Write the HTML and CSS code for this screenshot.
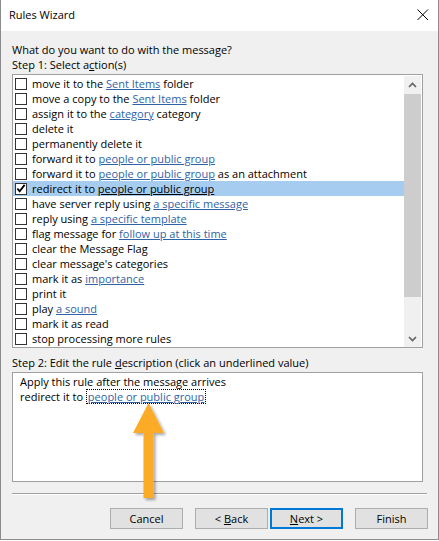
FILE: index.html
```html
<!DOCTYPE html>
<html>
<head>
<meta charset="utf-8">
<title>Rules Wizard</title>
<link rel="stylesheet" href="styles.css">
</head>
<body>
<div class="window">
  <div class="titlebar">
    <span class="title">Rules Wizard</span>
    <svg class="close" width="12" height="12" viewBox="0 0 12 12"><path d="M0.5 0.5 L11 11 M11 0.5 L0.5 11" stroke="#000" stroke-width="1" fill="none"/></svg>
  </div>
  <div class="content">
    <div class="label first">What do you want to do with the message?</div>
    <div class="label">Step 1: Select a<u>c</u>tion(s)</div>
    <div class="listbox">
      <ul class="items">
        <li class="item"><span class="cb"></span><span class="txt">move it to the <span class="lnk">Sent Items</span> folder</span></li>
        <li class="item"><span class="cb"></span><span class="txt">move a copy to the <span class="lnk">Sent Items</span> folder</span></li>
        <li class="item"><span class="cb"></span><span class="txt">assign it to the <span class="lnk">category</span> category</span></li>
        <li class="item"><span class="cb"></span><span class="txt">delete it</span></li>
        <li class="item"><span class="cb"></span><span class="txt">permanently delete it</span></li>
        <li class="item"><span class="cb"></span><span class="txt">forward it to <span class="lnk">people or public group</span></span></li>
        <li class="item"><span class="cb"></span><span class="txt">forward it to <span class="lnk">people or public group</span> as an attachment</span></li>
        <li class="item selected"><span class="cb checked"><svg width="11" height="11" viewBox="0 0 11 11"><path d="M1.5 5.5 L4 8.5 L9.5 1.5" stroke="#000" stroke-width="2" fill="none"/></svg></span><span class="txt">redirect it to <span class="lnk">people or public group</span></span></li>
        <li class="item"><span class="cb"></span><span class="txt">have server reply using <span class="lnk">a specific message</span></span></li>
        <li class="item"><span class="cb"></span><span class="txt">reply using <span class="lnk">a specific template</span></span></li>
        <li class="item"><span class="cb"></span><span class="txt">flag message for <span class="lnk">follow up at this time</span></span></li>
        <li class="item"><span class="cb"></span><span class="txt">clear the Message Flag</span></li>
        <li class="item"><span class="cb"></span><span class="txt">clear message's categories</span></li>
        <li class="item"><span class="cb"></span><span class="txt">mark it as <span class="lnk">importance</span></span></li>
        <li class="item"><span class="cb"></span><span class="txt">print it</span></li>
        <li class="item"><span class="cb"></span><span class="txt">play <span class="lnk">a sound</span></span></li>
        <li class="item"><span class="cb"></span><span class="txt">mark it as read</span></li>
        <li class="item"><span class="cb"></span><span class="txt">stop processing more rules</span></li>
      </ul>
      <div class="scrollbar">
        <div class="sb-btn"><svg width="9" height="6" viewBox="0 0 9 6"><path d="M1 5 L4.5 1.5 L8 5" stroke="#606060" stroke-width="1.6" fill="none"/></svg></div>
        <div class="sb-track"><div class="thumb"></div></div>
        <div class="sb-btn"><svg width="9" height="6" viewBox="0 0 9 6"><path d="M1 1 L4.5 4.5 L8 1" stroke="#606060" stroke-width="1.6" fill="none"/></svg></div>
      </div>
    </div>
    <div class="label step2">Step 2: Edit the rule <u>d</u>escription (click an underlined value)</div>
    <div class="desc">
      <div class="desc-line">Apply this rule after the message arrives</div>
      <div class="desc-line">redirect it to <span class="focus"><span class="lnk">people or public group</span></span></div>
    </div>
    <div class="sep"></div>
    <div class="buttons">
      <button class="btn">Cancel</button>
      <div class="pair">
        <button class="btn">&lt; <u>B</u>ack</button>
        <button class="btn default"><u>N</u>ext &gt;</button>
      </div>
      <button class="btn">Finish</button>
    </div>
  </div>
  <svg class="arrow" width="44" height="110" viewBox="0 0 44 110">
    <defs>
      <filter id="sh" x="-50%" y="-20%" width="200%" height="150%">
        <feGaussianBlur in="SourceAlpha" stdDeviation="1.6"/>
        <feOffset dx="2" dy="2" result="b"/>
        <feComponentTransfer><feFuncA type="linear" slope="0.35"/></feComponentTransfer>
        <feMerge><feMergeNode/><feMergeNode in="SourceGraphic"/></feMerge>
      </filter>
    </defs>
    <path d="M20.5 5 L36 35 L25.5 35 L25.5 100 L15.5 100 L15.5 35 L5 35 Z" fill="#fcab25" filter="url(#sh)"/>
  </svg>
</div>
</body>
</html>
```

FILE: styles.css
```css
* { box-sizing: border-box; }
html, body { margin: 0; padding: 0; background: #ffffff; }
body {
  font-family: "Open Sans", "Noto Sans", sans-serif;
  font-size: 11px;
  color: #000;
}
.window {
  position: relative;
  width: 439px;
  height: 540px;
  border: 1px solid #8c8c8c;
  border-top: none;
  background: #f0f0f0;
  display: flex;
  flex-direction: column;
}
.titlebar {
  height: 31px;
  background: #ffffff;
  display: flex;
  align-items: center;
  justify-content: space-between;
  padding: 0 9px 0 8px;
}
.title { font-size: 11px; line-height: 16px; margin-top: -1px; }
.close { display: block; margin-top: -1px; }
.content {
  padding: 0 10px 0 11px;
  display: flex;
  flex-direction: column;
}
.label { line-height: 15px; height: 15px; white-space: nowrap; }
.label.first { margin-top: 11px; }
.listbox {
  margin-top: 2px;
  width: 411px;
  height: 274px;
  border: 1px solid #a0a0a0;
  background: #fff;
  display: flex;
  padding: 1px 1px 0 0;
}
.items {
  list-style: none;
  margin: 0;
  padding: 0;
  flex: 1;
}
.item {
  height: 15px;
  display: flex;
  align-items: center;
  white-space: nowrap;
}
.item.selected { background: #a6cdf0; }
.cb {
  width: 12px;
  height: 12px;
  border: 1px solid #333;
  background: #fff;
  margin-left: 2px;
  margin-right: 5px;
  flex: none;
  display: flex;
  align-items: center;
  justify-content: center;
}
.cb svg { display: block; }
.txt { line-height: 15px; }
.lnk { color: #2f63a6; text-decoration: underline; text-underline-offset: 1px; }
.selected .lnk { color: #000; }
.scrollbar {
  width: 17px;
  flex: none;
  background: #f0f0f0;
  display: flex;
  flex-direction: column;
}
.sb-btn {
  height: 17px;
  display: flex;
  align-items: center;
  justify-content: center;
}
.sb-btn svg { display: block; }
.sb-track { flex: 1; padding-top: 1px; }
.thumb { height: 203px; background: #cdcdcd; }
.label.step2 { margin-top: 7px; }
.desc {
  margin-top: 2px;
  width: 411px;
  height: 110px;
  border: 1px solid #a0a0a0;
  background: #fff;
  padding: 1px 0 0 7px;
}
.desc-line { line-height: 15px; white-space: nowrap; }
.focus { border: 1px dotted #000; padding: 0 1px; line-height: 13px; display: inline-block; }
.sep {
  margin-top: 11px;
  height: 2px;
  width: 415px;
  border-top: 1px solid #a0a0a0;
  border-bottom: 1px solid #ffffff;
}
.buttons {
  margin-top: 13px;
  display: flex;
  justify-content: flex-end;
  gap: 12px;
}
.pair { display: flex; gap: 2px; }
.btn {
  width: 73px;
  height: 21px;
  background: #e1e1e1;
  border: 1px solid #adadad;
  font-family: "Open Sans", "Noto Sans", sans-serif;
  font-size: 11px;
  color: #000;
  padding: 0;
  line-height: 17px;
}
.btn.default { border: 2px solid #0078d7; }
.arrow {
  position: absolute;
  left: 127px;
  top: 398px;
}
```
